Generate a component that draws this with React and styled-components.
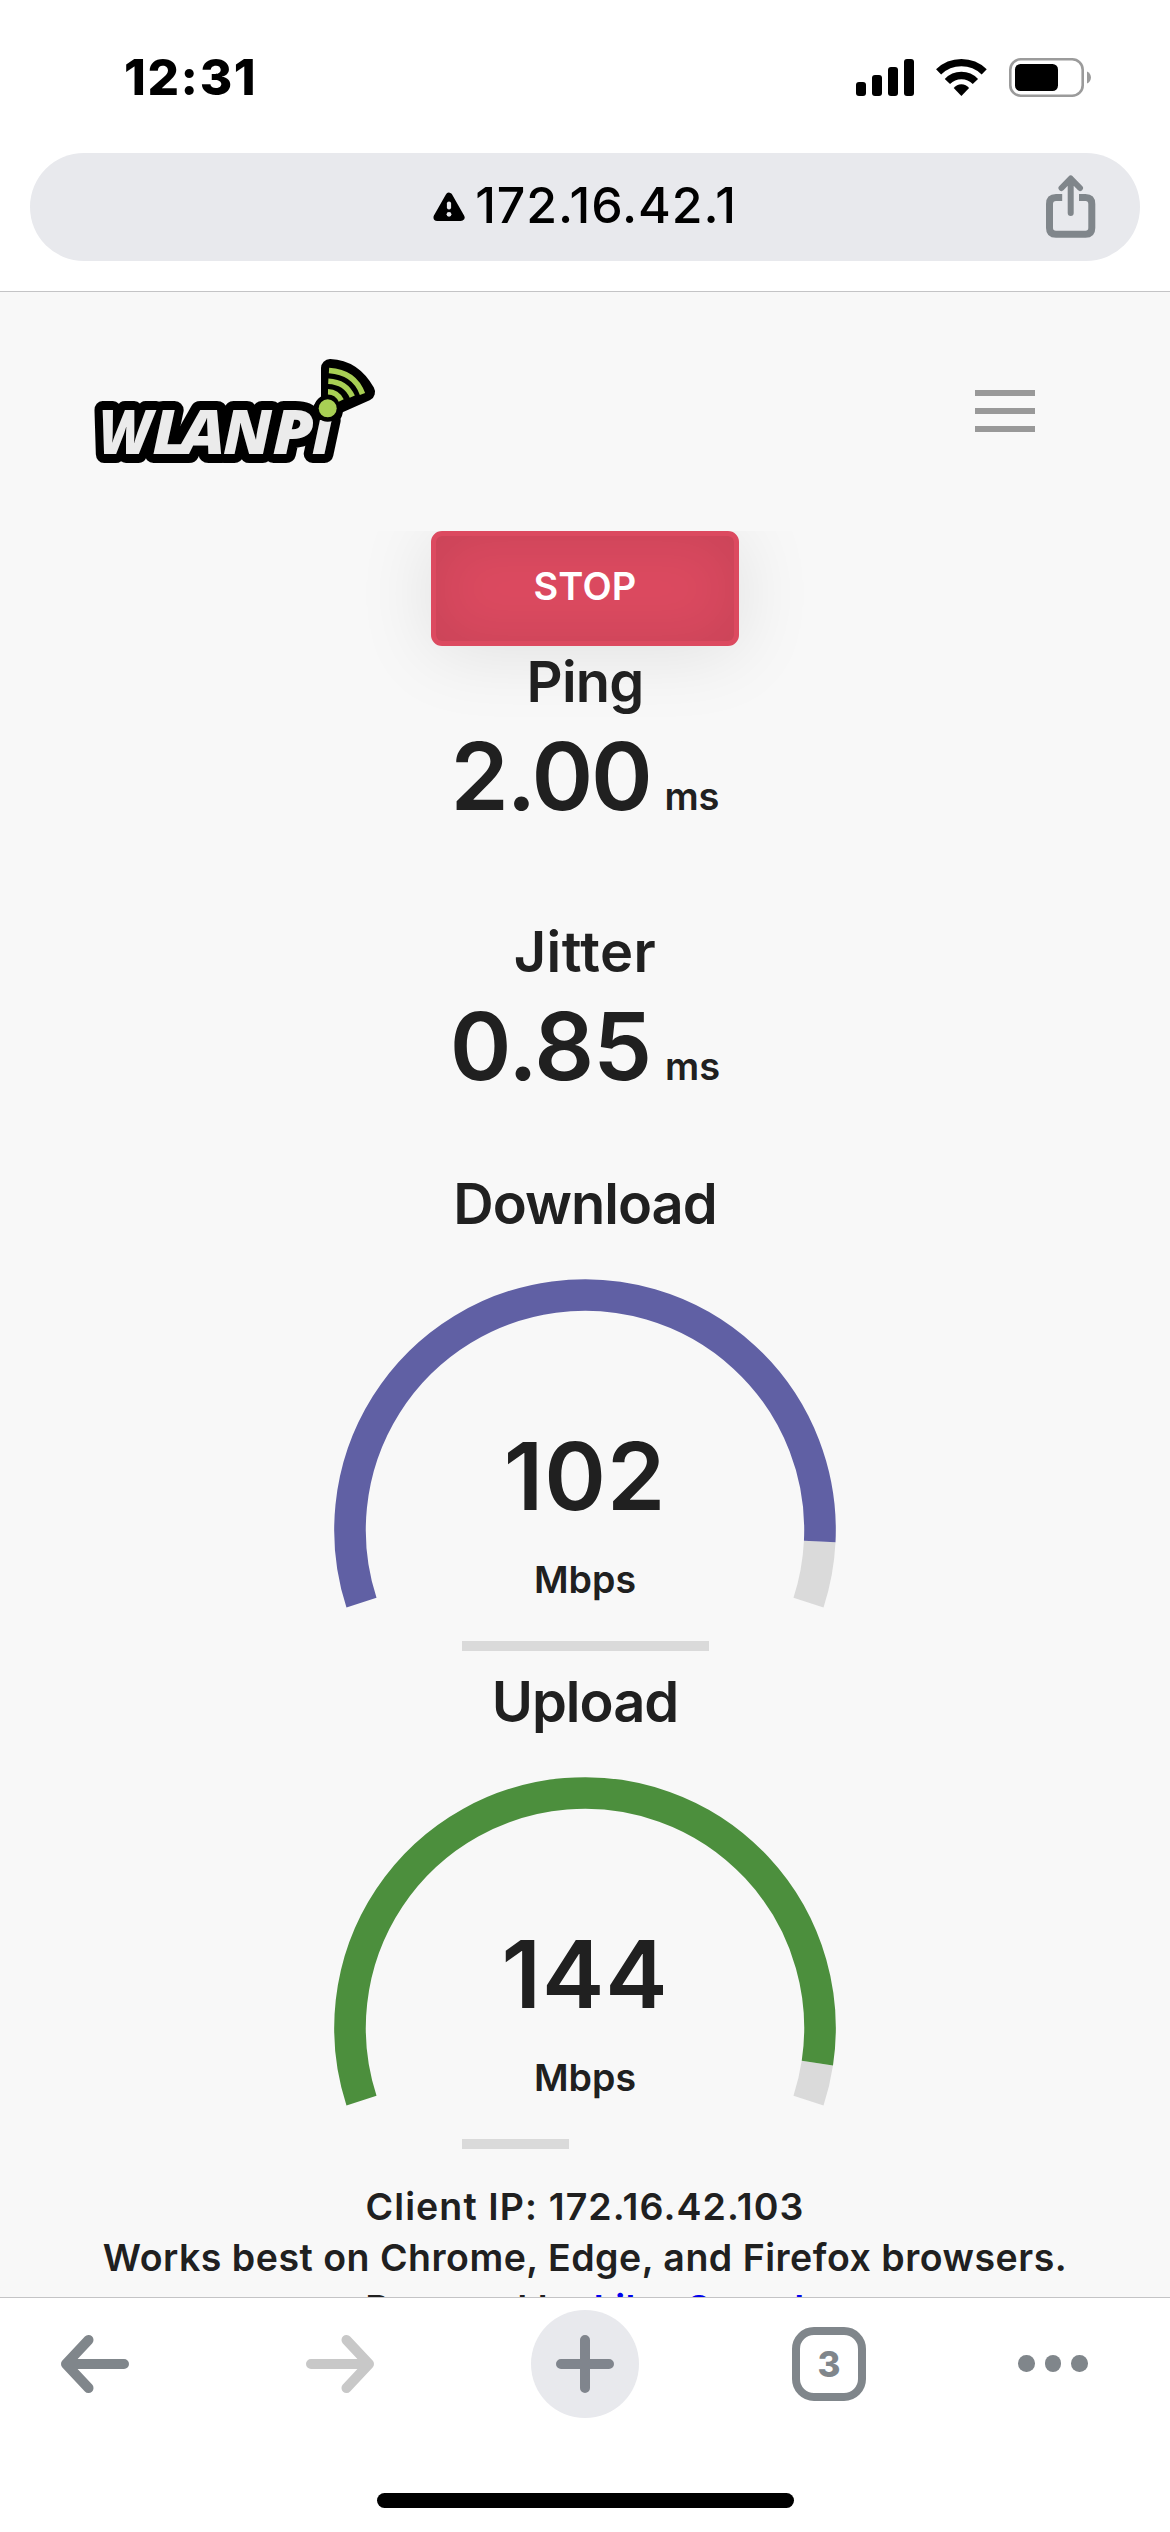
import styled, { createGlobalStyle } from "styled-components";

export default function App() {
    return (
        <Phone>
            <GlobalStyle />
            <StatusBar>
                <Time>12:31</Time>
                <StatusIcons />
            </StatusBar>
            <AddressBar>
                <Pill>
                    <Address>
                        <WarningIcon />
                        <Url>172.16.42.1</Url>
                    </Address>
                    <ShareIcon />
                </Pill>
            </AddressBar>
            <Page>
                <Header>
                    <Logo />
                    <MenuButton>
                        <Line />
                        <Line />
                        <Line />
                    </MenuButton>
                </Header>
                <Test>
                    <StopButton>STOP</StopButton>
                    <PingArea label="Ping" value="2.00" height={270} labelSpace={-0.8} space={-2.3} />
                    <PingArea label="Jitter" value="0.85" height={252} labelSpace={0.5} space={-1} />
                    <SpeedArea label="Download" value="102" color="#6060a4" angle={200.8} progress={247} space={1} />
                    <SpeedArea label="Upload" value="144" color="#4c8f3d" angle={206.6} progress={107} space={1} />
                    <Info>
                        <InfoLine space={1.1}>Client IP: 172.16.42.103</InfoLine>
                        <InfoLine space={0.5}>Works best on Chrome, Edge, and Firefox browsers.</InfoLine>
                        <InfoLine space={0.5}>Powered by <a href="#librespeed">LibreSpeed</a></InfoLine>
                    </Info>
                </Test>
            </Page>
            <Toolbar>
                <BackIcon />
                <ForwardIcon />
                <NewTab>
                    <PlusIcon />
                </NewTab>
                <Tabs>3</Tabs>
                <Dots>
                    <Dot />
                    <Dot />
                    <Dot />
                </Dots>
            </Toolbar>
            <HomeArea>
                <HomeIndicator />
            </HomeArea>
        </Phone>
    );
}

function PingArea({ label, value, height, labelSpace, space }) {
    return (
        <PingBox height={height}>
            <TestName space={labelSpace}>{label}</TestName>
            <Reading>
                <Meter space={space}>{value}</Meter>
                <Unit>ms</Unit>
            </Reading>
        </PingBox>
    );
}

function SpeedArea({ label, value, color, angle, progress, space }) {
    return (
        <SpeedBox>
            <TestName space={-1}>{label}</TestName>
            <GaugeBox>
                <Gauge color={color} angle={angle} />
                <GaugeText>
                    <Meter space={space}>{value}</Meter>
                    <SpeedUnit>Mbps</SpeedUnit>
                </GaugeText>
            </GaugeBox>
            <Progress>
                <ProgressBar style={{ width: progress }} />
            </Progress>
        </SpeedBox>
    );
}

// angle is counted clockwise from the left end of the 216 degree arc
function arc(from, to) {
    const point = (deg) => {
        const rad = ((162 + deg) * Math.PI) / 180;
        return `${251 + 235 * Math.cos(rad)} ${251 + 235 * Math.sin(rad)}`;
    };
    return `M${point(from)} A235 235 0 ${to - from > 180 ? 1 : 0} 1 ${point(to)}`;
}

function Gauge({ color, angle }) {
    return (
        <svg width="502" height="330" viewBox="0 0 502 330" fill="none" strokeWidth="31.6">
            <path d={arc(angle, 216)} stroke="#dadada" />
            <path d={arc(0, angle)} stroke={color} />
        </svg>
    );
}

const letters = [
    { char: "W", x: 18.5, stretch: 0.915 },
    { char: "L", x: 72.5, stretch: 1 },
    { char: "A", x: 99.5, stretch: 1.1 },
    { char: "N", x: 143, stretch: 1 },
    { char: "P", x: 192.5, stretch: 1.07 },
    { char: "i", x: 232, stretch: 1 },
];

function Logo() {
    return (
        <svg width="320" height="140" viewBox="0 0 320 140">
            <g stroke="#000" strokeWidth="18" strokeLinejoin="round">
                <use href="#wlanpi" />
                <path d="M250 68 V28 Q273 29 286 52 Z" />
            </g>
            <g id="wlanpi" fill="#ebebeb">
                {letters.map(({ char, x, stretch }) => (
                    <LogoText key={char} transform={`translate(${x} 114.3) scale(${stretch} 1)`}>
                        {char}
                    </LogoText>
                ))}
            </g>
            <circle cx="247.7" cy="68.3" r="13.5" />
            <circle cx="247.7" cy="68.3" r="9" fill="#a8cf54" />
            <g fill="none" stroke="#a8cf54" strokeWidth="5.6">
                <path d="M248 51.8 Q257 52 261.2 60.5" />
                <path d="M248.3 41.2 Q266 42 272.3 56.7" />
                <path d="M249 30.5 Q274.500 32 282.5 54" />
            </g>
        </svg>
    );
}

function StatusIcons() {
    return (
        <svg width="240" height="44" viewBox="0 0 240 44">
            <rect x="4" y="26" width="10" height="14" rx="3" />
            <rect x="20" y="19" width="10" height="21" rx="3" />
            <rect x="36" y="11" width="10" height="29" rx="3" />
            <rect x="52" y="3" width="10" height="37" rx="3" />
            <g fill="none" stroke="#000" strokeWidth="7.3">
                <path d="M86.600 15.800 A32.900 32.900 0 0 1 132.200 15.800" />
                <path d="M95.400 25.500 A19.300 19.300 0 0 1 123.400 25.500" />
            </g>
            <path d="M101.700 32 A9.800 9.800 0 0 1 117.100 32 L109.400 40 Z" />
            <rect x="158.300" y="3.300" width="72.400" height="36.400" rx="10.500" fill="none" stroke="#9b9b9b" strokeWidth="2.600" />
            <rect x="163" y="8" width="43" height="27" rx="5.500" />
            <path d="M235 15.500 C240.300 17.500 240.300 25.500 235 27.500 Z" fill="#9b9b9b" />
        </svg>
    );
}

function WarningIcon() {
    return (
        <svg width="32" height="30" viewBox="0 0 32 30">
            <path d="M16 4.500 L27.800 25.300 H4.200 Z" stroke="#000" strokeWidth="7.500" strokeLinejoin="round" />
            <path d="M16 11.500 V15.500" stroke="#e8e9ed" strokeWidth="4.200" strokeLinecap="round" />
            <circle cx="16" cy="22.300" r="2.400" fill="#e8e9ed" />
        </svg>
    );
}

function ShareIcon() {
    return (
        <svg width="50" height="64" viewBox="0 0 50 64" fill="none" stroke="#80868b">
            <path d="M16.200 22.500 H10 Q3.500 22.500 3.500 29 V53 Q3.500 59.300 10 59.300 H39.500 Q45.800 59.300 45.800 53 V29 Q45.800 22.500 39.500 22.500 H33" strokeWidth="7" />
            <path d="M24.700 38 V4 M15.500 13 L24.700 3.500 L34 13" strokeWidth="6" strokeLinecap="round" strokeLinejoin="round" />
        </svg>
    );
}

function BackIcon() {
    return (
        <Arrow color="#80868b" viewBox="0 0 70 58">
            <path d="M64 29 H6 M28.500 5 L6 29 L28.500 53" />
        </Arrow>
    );
}

function ForwardIcon() {
    return (
        <Arrow color="#c8c8c8" viewBox="0 0 70 58">
            <path d="M6 29 H64 M41.500 5 L64 29 L41.500 53" />
        </Arrow>
    );
}

function PlusIcon() {
    return (
        <svg width="58" height="58" viewBox="0 0 58 58" stroke="#80858d" strokeWidth="10" strokeLinecap="round">
            <path d="M29 5 V53 M5 29 H53" />
        </svg>
    );
}

const GlobalStyle = createGlobalStyle`
    * {
        box-sizing: border-box;
        margin: 0;
    }
    body {
        background: #fff;
        font-family: 'Inter', sans-serif;
    }
    svg {
        display: block;
        flex-shrink: 0;
    }
`

const Phone = styled.div`
    display: flex;
    flex-direction: column;
    width: 1170px;
    height: 2532px;
    overflow: hidden;
    background: #fff;
`

const StatusBar = styled.div`
    display: flex;
    flex-shrink: 0;
    justify-content: space-between;
    height: 153px;
    padding: 56px 78px 0 124px;
`

const Time = styled.div`
    font-size: 49.500px;
    font-weight: 800;
    line-height: 43px;
    letter-spacing: 1.600px;
`

const AddressBar = styled.div`
    flex: 0 0 139px;
    padding: 0 30px;
    border-bottom: 1px solid #c4c4c6;
`

const Pill = styled.div`
    display: grid;
    grid-template-columns: 1fr auto 1fr;
    align-items: center;
    height: 108px;
    padding: 0 44px;
    border-radius: 54px;
    background: #e8e9ed;

    > :last-child {
        justify-self: end;
    }
`

const Address = styled.div`
    display: flex;
    align-items: center;
    grid-column: 2;
    gap: 10px;
`

const Url = styled.span`
    margin-top: -4px;
    font-size: 50px;
    font-weight: 500;
    line-height: 60px;
    letter-spacing: 0.900px;
`

const Page = styled.div`
    flex: 0 0 2005px;
    overflow: hidden;
    background: #f8f8f8;
`

const Header = styled.div`
    display: flex;
    justify-content: space-between;
    height: 239px;
    padding: 48px 135px 0 80px;
`

const LogoText = styled.text`
    font-family: 'Open Sans', sans-serif;
    font-size: 62px;
    font-style: italic;
    font-weight: 800;
`

const MenuButton = styled.div`
    display: flex;
    flex-direction: column;
    gap: 12px;
    margin-top: 50px;
`

const Line = styled.div`
    width: 60px;
    height: 6px;
    background: #999;
`

const Test = styled.div`
    display: flex;
    flex-direction: column;
    align-items: center;
    height: 1766px;
    overflow: hidden;
    color: #202020;
    font-weight: 600;
    text-align: center;

    > * {
        flex-shrink: 0;
    }
`

const StopButton = styled.div`
    width: 308px;
    height: 115px;
    border: 5px solid #dc4a60;
    border-radius: 11px;
    background: #dc4a60;
    box-shadow: 0 5px 77px rgba(0, 0, 0, 0.1), inset 0 0 60px rgba(0, 0, 0, 0.1);
    color: #fff;
    font-size: 38px;
    font-weight: 600;
    line-height: 101px;
    letter-spacing: 0.200px;
`

const PingBox = styled.div`
    height: ${props => props.height}px;
`

const TestName = styled.div`
    font-size: 56px;
    line-height: 72px;
    letter-spacing: ${props => props.space}px;
`

const Reading = styled.div`
    display: flex;
    align-items: baseline;
    justify-content: center;
    gap: 14px;
    line-height: 116px;
`

const Meter = styled.span`
    font-size: 93.600px;
    letter-spacing: ${props => props.space}px;
`

const Unit = styled.span`
    font-size: 38px;
`

const SpeedBox = styled.div`
    height: 498px;
`

const GaugeBox = styled.div`
    display: grid;
    height: 362px;
    margin-top: 39px;

    > * {
        grid-area: 1 / 1;
    }
`

const GaugeText = styled.div`
    display: flex;
    flex-direction: column;
    align-items: center;
    padding-top: 139px;
    line-height: 116px;
`

const SpeedUnit = styled.span`
    margin-top: 22px;
    font-size: 37.500px;
    line-height: 48px;
`

const Progress = styled.div`
    width: 247px;
    margin: 0 auto;
`

const ProgressBar = styled.div`
    height: 10px;
    background: #dadada;
`

const Info = styled.div`
    margin-top: 17px;
    font-size: 37.500px;
    line-height: 51px;
    white-space: nowrap;

    a {
        color: #0000ee;
        text-decoration: none;
    }
`

const InfoLine = styled.p`
    letter-spacing: ${props => props.space}px;
`

const Toolbar = styled.div`
    display: grid;
    grid-template-columns: 245px 226px 261px 226px auto;
    align-items: center;
    justify-content: start;
    flex: 0 0 132px;
    padding-left: 60px;
    border-top: 1px solid #c4c4c6;
`

const Arrow = styled.svg`
    width: 70px;
    height: 58px;
    fill: none;
    stroke: ${props => props.color};
    stroke-width: 10;
    stroke-linecap: round;
    stroke-linejoin: round;
`

const NewTab = styled.div`
    display: flex;
    align-items: center;
    justify-content: center;
    width: 108px;
    height: 108px;
    border-radius: 50%;
    background: #e8e9ed;
`

const Tabs = styled.div`
    width: 74px;
    height: 74px;
    border: 8px solid #80868b;
    border-radius: 22px;
    color: #80868b;
    font-size: 35px;
    font-weight: 800;
    line-height: 58px;
    text-align: center;
`

const Dots = styled.div`
    display: flex;
    gap: 10px;
`

const Dot = styled.div`
    width: 16.500px;
    height: 16.500px;
    border-radius: 50%;
    background: #80868b;
`

const HomeArea = styled.div`
    display: flex;
    justify-content: center;
    padding-top: 64px;
`

const HomeIndicator = styled.div`
    width: 417px;
    height: 15px;
    border-radius: 8px;
    background: #000;
`
